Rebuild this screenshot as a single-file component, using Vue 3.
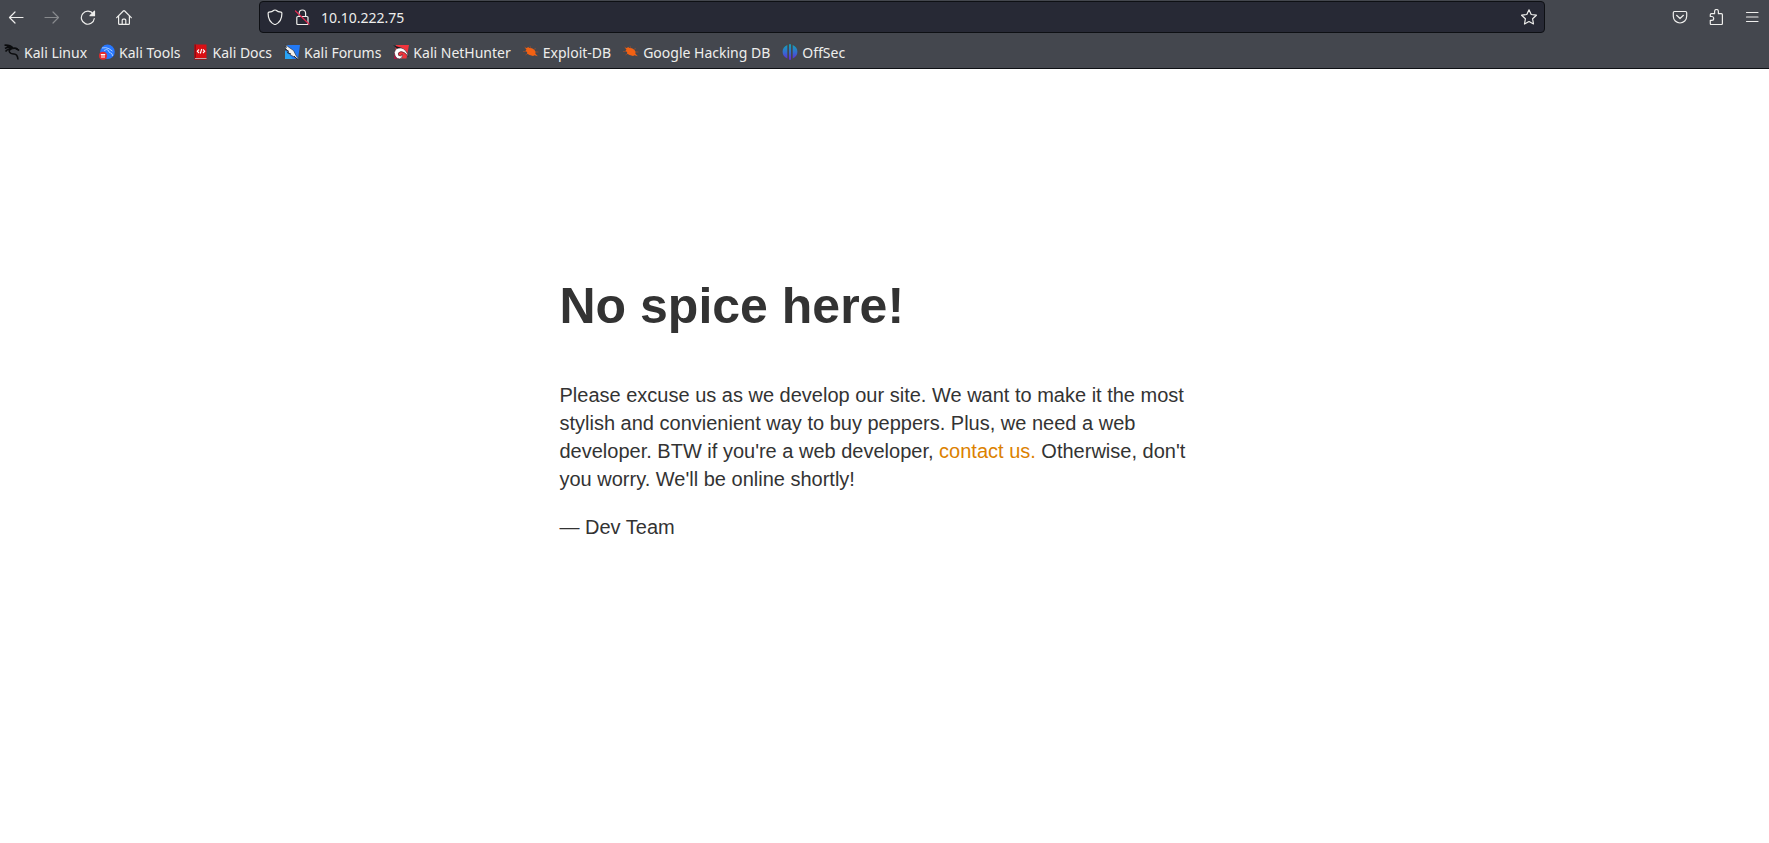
<script setup>
import { ref } from 'vue'

const address = ref('10.10.222.75')
const bookmarks = [
  { label: 'Kali Linux', icon: 'dragon' },
  { label: 'Kali Tools', icon: 'tools' },
  { label: 'Kali Docs', icon: 'docs' },
  { label: 'Kali Forums', icon: 'forums' },
  { label: 'Kali NetHunter', icon: 'nethunter' },
  { label: 'Exploit-DB', icon: 'bug' },
  { label: 'Google Hacking DB', icon: 'bug' },
  { label: 'OffSec', icon: 'offsec' },
]
</script>

<template>
  <div class="browser">
    <header class="chrome">
      <div class="toolbar">
        <nav class="buttons" aria-label="Navigation">
          <button type="button" aria-label="Back">
            <svg viewBox="0 0 16 16"><path d="M15 8.500H1.500M7 3L1.500 8.500 7 14" /></svg>
          </button>
          <button type="button" aria-label="Forward" disabled>
            <svg viewBox="0 0 16 16"><path d="M1 8.500h13.500M9 3l5.500 5.500L9 14" /></svg>
          </button>
          <button type="button" aria-label="Reload">
            <svg viewBox="0 0 16 16"><path d="M13.200 5A6.500 6.500 0 1 0 14.300 9.500" /><path class="solid" d="M14.500 2.200v4.500H10z" /></svg>
          </button>
          <button type="button" aria-label="Home">
            <svg viewBox="0 0 16 16"><path d="M.7 8.700L7.300 2q.7-.6 1.400 0l6.600 6.700M2.600 7v7.400q0 1 1 1h8.800q1 0 1-1V7M6.200 15.200v-4q0-1 1-1h1.600q1 0 1 1v4" /></svg>
          </button>
        </nav>
        <form class="urlbar" @submit.prevent>
          <svg viewBox="0 0 16 16"><path d="M8 1q.6 0 1 .3Q11 3 14 3.200q.9.1.9 1.200C14.900 10 12.500 13.800 8 15.700 3.500 13.800 1.100 10 1.100 4.400q0-1.100.9-1.200Q5 3 7 1.300q.4-.3 1-.3z" /></svg>
          <svg viewBox="0 0 16 16"><path d="M5.200 7V4.200a3.200 3.200 0 0 1 6.400 0V7M3.800 7.500h9.200q1 0 1 1v6q0 1-1 1H3.800q-1 0-1-1v-6q0-1 1-1z" /><path class="strike" d="M1.500 2l13.500 13" /></svg>
          <input v-model="address" type="text" aria-label="Address" spellcheck="false" />
          <button type="button" aria-label="Bookmark this page">
            <svg viewBox="0 0 16 16"><path d="M8 .8l2.200 4.700 5.200.7-3.800 3.600.9 5.200L8 12.500 3.500 15l.9-5.200L.6 6.200l5.200-.7z" /></svg>
          </button>
        </form>
        <div class="buttons tools">
          <button type="button" aria-label="Save to Pocket">
            <svg viewBox="0 0 16 16"><path d="M2.500 2.500h11q1.200 0 1.200 1.200v3.600a6.700 6.700 0 0 1-13.400 0V3.700q0-1.200 1.200-1.200zM4.600 6.300L8 9.500l3.400-3.200" /></svg>
          </button>
          <button type="button" aria-label="Extensions">
            <svg viewBox="0 0 16 16"><path d="M3.300 15.500q-1 0-1-1v-3.200h1.500a1.900 1.900 0 0 0 0-3.800H2.300V5.700q0-1 1-1h3.300V2.400a1.900 1.900 0 0 1 3.800 0v2.300h3q1 0 1 1v8.800q0 1-1 1z" /></svg>
          </button>
          <button type="button" aria-label="Menu">
            <svg viewBox="0 0 16 16"><path d="M2.500 3.500h11.500M2.500 8h11.500M2.500 12.500h11.500" /></svg>
          </button>
        </div>
      </div>

      <nav class="bookmarks" aria-label="Bookmarks">
        <a v-for="item in bookmarks" :key="item.label" href="#">
          <svg v-if="item.icon === 'dragon'" viewBox="0 0 16 16">
            <path d="M.5 1.200Q6 .8 9 4M1 4.500Q4 2.500 7 4.500M1.500 7.500Q3 5 6 5.200M8.500 4.500q3-1 5 .8l1.500 1M8.300 4.800Q4.500 5.500 5.500 8q1 2 4.500 2t4 5.500" fill="none" stroke="#0b0c0e" stroke-width="1.600" />
            <path d="M1 1l6 1.200 2 2.300-3 .5zM10 4l3.500.2L15.500 7l-3-1.200z" fill="#0b0c0e" />
          </svg>
          <svg v-else-if="item.icon === 'tools'" viewBox="0 0 16 16">
            <circle cx="8.500" cy="7.800" r="7.300" fill="#2777ff" />
            <path d="M3 4q4-1 7 .7l3.500 2.500M5 6.500q3-2 4.500 0 0 2 2 2.300t2 3.200" fill="none" stroke="#a9ceff" />
            <circle cx="4" cy="11.800" r="4" fill="#e52b2d" />
            <path d="M1.800 10.500h4.400M3 10.500v3.500M5 10.500v3.500" stroke="#fff" />
          </svg>
          <svg v-else-if="item.icon === 'docs'" viewBox="0 0 16 16">
            <path d="M1.500.5h12v14h-12z" fill="#d90f14" />
            <path d="M1.500.5H3v14H1.500z" fill="#920b11" />
            <path d="M2 14.200h11.500v.8H2z" fill="#d3c9cc" />
            <path d="M1.500 15h12v.7h-12z" fill="#a70d12" />
            <path d="M6 5.500L4.300 7.200 6 9M10 5.500l1.700 1.700L10 9M8.700 5l-1.400 4.500" fill="none" stroke="#fff" stroke-width="1.100" />
          </svg>
          <svg v-else-if="item.icon === 'forums'" viewBox="0 0 16 16">
            <path d="M3 1h13l-2 14H1z" fill="#2379f5" />
            <path d="M1 6l8 9H1z" fill="#28a4f4" />
            <path d="M1.500.5l3 2.500 5 3.500 2.800 5.500 3.200 3.500-3.500-1.500-6-3.500L3.500 7 .5 3l2 .5z" fill="#f2f1ed" stroke="#242934" stroke-width=".6" />
            <path d="M5 7.500L1 5M7 10l-4-1.500M10 12l3.500 3.500" stroke="#252b38" />
          </svg>
          <svg v-else-if="item.icon === 'nethunter'" viewBox="0 0 16 16">
            <path d="M3 1h13l-2.500 13.500H1z" fill="#f2343d" />
            <path d="M1 9l8 6H1z" fill="#a91743" />
            <path d="M1.300 8.500Q3 2.800 7.700 3.800q6 1.400 7.800 9.200-3.500-5.500-7.500-5.500-4 1-2.500 3.800 2 1.600 3.800-.9.500 4-2.500 4.500-4.800.1-5.500-6.400z" fill="#fff" stroke="#30212c" stroke-width=".6" />
            <path d="M0 1l8.500 3L4 4.500z" fill="#17191e" />
          </svg>
          <svg v-else-if="item.icon === 'bug'" viewBox="0 0 16 16">
            <path d="M1.500 3l2.500 2M0 7.500h4M2.500 11l3-2M7.500 4L7 2M10.500 5.500l2.500-1M12 8h3.500M11 10l3.500 2" stroke="#a04e2a" stroke-width=".7" />
            <path d="M2 3.800l2 .3 1-1 1.500.8 2.500.3 2.500 1.800 1 1.800-.2 1.700 2.200 2.500-3-.7-1.500.7-2.500-.8-1-.2L4 9.500l.2-1.200L2.500 6.500l1-1z" fill="#f26113" />
          </svg>
          <svg v-else viewBox="0 0 16 16">
            <defs>
              <linearGradient id="offsec-fill" gradientUnits="userSpaceOnUse" x1="0" y1="0" x2="0" y2="16">
                <stop offset="0" stop-color="#12a7b4" />
                <stop offset=".5" stop-color="#326fd0" />
                <stop offset="1" stop-color="#6825d4" />
              </linearGradient>
            </defs>
            <path d="M5.300 1v13.500Q.6 12.500.6 7.800T5.300 1zM10.700 1v13.500q4.700-2 4.700-6.700T10.700 1zM7 .3h2v15.400H7z" fill="url(#offsec-fill)" />
          </svg>
          <span>{{ item.label }}</span>
        </a>
      </nav>
    </header>

    <main>
      <article>
        <h1>No spice here!</h1>
        <p>
          Please excuse us as we develop our site. We want to make it the most
          stylish and convienient way to buy peppers. Plus, we need a web
          developer. BTW if you're a web developer, <a href="#">contact us.</a>
          Otherwise, don't you worry. We'll be online shortly!
        </p>
        <p>— Dev Team</p>
      </article>
    </main>
  </div>
</template>

<style>
body {
  margin: 0;
  background: #fff;
}
</style>

<style scoped>
.chrome {
  background: #44474e;
  border-bottom: 1px solid #0e1014;
  color: #eeeeec;
  font-family: "Noto Sans", "Open Sans", sans-serif;
  font-size: 14px;
}
.toolbar {
  display: flex;
  align-items: center;
  height: 34px;
}
.buttons {
  display: flex;
  gap: 4px;
  padding-right: 2px;
}
.tools {
  padding: 0 1px 0 2px;
}
button {
  display: flex;
  align-items: center;
  justify-content: center;
  width: 32px;
  height: 32px;
  padding: 0;
  border: 0;
  background: none;
  color: inherit;
}
button:disabled {
  opacity: 0.4;
}
svg {
  flex: none;
  width: 16px;
  height: 16px;
}
.toolbar svg {
  fill: none;
  stroke: currentColor;
  stroke-width: 1.2;
  stroke-linecap: round;
  stroke-linejoin: round;
}
.toolbar .solid {
  fill: currentColor;
}
.toolbar .strike {
  stroke: #e22850;
}
.urlbar {
  display: flex;
  flex: 0 1 72.7%;
  align-items: center;
  gap: 11px;
  box-sizing: border-box;
  height: 32px;
  margin: 0 auto;
  padding-left: 7px;
  border: 1px solid #0e1014;
  border-radius: 4px;
  background: #272935;
}
.urlbar button {
  width: 30px;
  height: 30px;
}
.urlbar input {
  flex: 1;
  min-width: 0;
  padding: 0;
  border: 0;
  outline: 0;
  background: none;
  color: inherit;
  font: inherit;
}
.bookmarks {
  display: flex;
  align-items: center;
  gap: 12px;
  height: 32px;
  padding: 2px 4px 0;
}
.bookmarks a {
  display: flex;
  align-items: center;
  gap: 4px;
  color: inherit;
  text-decoration: none;
  white-space: nowrap;
}
main {
  padding: 207px 20px 150px;
  color: #333;
  font: 20px/28px "Liberation Sans", Helvetica, Arial, sans-serif;
}
article {
  max-width: 650px;
  margin: 0 auto;
}
h1 {
  margin: 0 0 45px;
  font-size: 50px;
  line-height: 60px;
}
p {
  margin: 0 0 20px;
}
p a {
  color: #dc8100;
  text-decoration: none;
}
</style>
